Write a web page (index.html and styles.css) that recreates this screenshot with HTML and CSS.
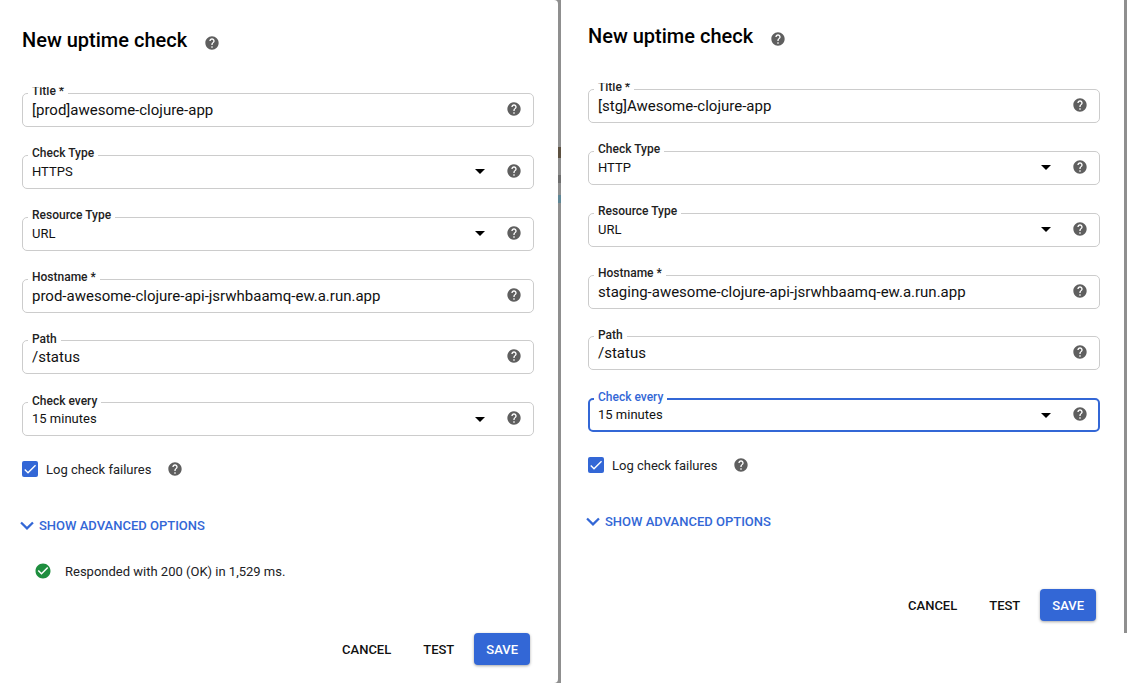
FILE: index.html
```html
<!DOCTYPE html>
<html lang="en">
<head>
  <meta charset="UTF-8" />
  <title>New uptime check</title>
  <link rel="stylesheet" href="styles.css">
</head>
<body>
  <svg class="defs" width="0" height="0">
    <symbol id="help" viewBox="0 0 24 24"><path d="M12 2C6.48 2 2 6.48 2 12s4.48 10 10 10 10-4.48 10-10S17.52 2 12 2zm1 17h-2v-2h2v2zm2.07-7.75l-.9.92C13.45 12.9 13 13.5 13 15h-2v-.5c0-1.1.45-2.1 1.17-2.83l1.24-1.26c.37-.36.59-.86.59-1.41 0-1.1-.9-2-2-2s-2 .9-2 2H8c0-2.21 1.79-4 4-4s4 1.79 4 4c0 .88-.36 1.68-.93 2.25z"/></symbol>
    <symbol id="tick" viewBox="0 0 24 24"><path d="M9 16.2L4.8 12l-1.4 1.4L9 19 21 7l-1.4-1.4z"/></symbol>
    <symbol id="chevron" viewBox="6 8 12 8"><path d="M7.41 8.59L12 13.17l4.59-4.58L18 10l-6 6-6-6z"/></symbol>
    <symbol id="ok" viewBox="0 0 24 24"><path d="M12 2C6.48 2 2 6.48 2 12s4.48 10 10 10 10-4.48 10-10S17.52 2 12 2zm-2 15l-5-5 1.41-1.41L10 14.17l7.59-7.59L19 8l-9 9z"/></symbol>
  </svg>

  <div class="shot">
    <div class="pane pane-prod">
      <section class="dialog dialog-prod">
        <div class="heading">
          <h1>New uptime check</h1>
          <svg class="help help-title"><use href="#help"/></svg>
        </div>

        <div class="field">
          <label class="clipped"><span>Title *</span></label>
          <span class="value big">[prod]awesome-clojure-app</span>
          <svg class="help"><use href="#help"/></svg>
        </div>
        <div class="field">
          <label>Check Type</label>
          <span class="value">HTTPS</span>
          <i class="arrow"></i>
          <svg class="help"><use href="#help"/></svg>
        </div>
        <div class="field">
          <label>Resource Type</label>
          <span class="value">URL</span>
          <i class="arrow"></i>
          <svg class="help"><use href="#help"/></svg>
        </div>
        <div class="field">
          <label>Hostname *</label>
          <span class="value big">prod-awesome-clojure-api-jsrwhbaamq-ew.a.run.app</span>
          <svg class="help"><use href="#help"/></svg>
        </div>
        <div class="field">
          <label>Path</label>
          <span class="value big">/status</span>
          <svg class="help"><use href="#help"/></svg>
        </div>
        <div class="field">
          <label>Check every</label>
          <span class="value">15 minutes</span>
          <i class="arrow"></i>
          <svg class="help"><use href="#help"/></svg>
        </div>

        <div class="log-row">
          <span class="checkbox"><svg><use href="#tick"/></svg></span>
          <span>Log check failures</span>
          <svg class="help"><use href="#help"/></svg>
        </div>

        <div class="advanced">
          <svg class="chevron"><use href="#chevron"/></svg>
          <span>SHOW ADVANCED OPTIONS</span>
        </div>

        <div class="result">
          <svg class="ok"><use href="#ok"/></svg>
          <span>Responded with 200 (OK) in 1,529 ms.</span>
        </div>

        <div class="actions">
          <button class="btn">CANCEL</button>
          <button class="btn">TEST</button>
          <button class="btn primary">SAVE</button>
        </div>
      </section>
    </div>

    <div class="pane pane-stg">
      <section class="dialog dialog-stg">
        <div class="heading">
          <h1>New uptime check</h1>
          <svg class="help help-title"><use href="#help"/></svg>
        </div>

        <div class="field">
          <label class="clipped"><span>Title *</span></label>
          <span class="value big">[stg]Awesome-clojure-app</span>
          <svg class="help"><use href="#help"/></svg>
        </div>
        <div class="field">
          <label>Check Type</label>
          <span class="value">HTTP</span>
          <i class="arrow"></i>
          <svg class="help"><use href="#help"/></svg>
        </div>
        <div class="field">
          <label>Resource Type</label>
          <span class="value">URL</span>
          <i class="arrow"></i>
          <svg class="help"><use href="#help"/></svg>
        </div>
        <div class="field">
          <label>Hostname *</label>
          <span class="value big">staging-awesome-clojure-api-jsrwhbaamq-ew.a.run.app</span>
          <svg class="help"><use href="#help"/></svg>
        </div>
        <div class="field">
          <label>Path</label>
          <span class="value big">/status</span>
          <svg class="help"><use href="#help"/></svg>
        </div>
        <div class="field focused">
          <label>Check every</label>
          <span class="value">15 minutes</span>
          <i class="arrow"></i>
          <svg class="help"><use href="#help"/></svg>
        </div>

        <div class="log-row">
          <span class="checkbox"><svg><use href="#tick"/></svg></span>
          <span>Log check failures</span>
          <svg class="help"><use href="#help"/></svg>
        </div>

        <div class="advanced">
          <svg class="chevron"><use href="#chevron"/></svg>
          <span>SHOW ADVANCED OPTIONS</span>
        </div>

        <div class="actions">
          <button class="btn">CANCEL</button>
          <button class="btn">TEST</button>
          <button class="btn primary">SAVE</button>
        </div>
      </section>
      <div class="edge"></div>
    </div>
  </div>
</body>
</html>
```

FILE: styles.css
```css
html, body {
  margin: 0;
  height: 100%;
  background: #fff;
  overflow: hidden;
}
body {
  font-family: 'Roboto', sans-serif;
  color: #202124;
}
.defs {
  position: absolute;
}
.shot {
  display: flex;
  align-items: flex-start;
}
.pane {
  display: flex;
}
/* the grey strip shows a little of the page behind the dialog */
.pane-prod {
  width: 561px;
  height: 683px;
  background: linear-gradient(to bottom,
    #8f8f8f 147px, #5c5040 147px, #5c5040 158px,
    #8f8f8f 158px, #8f8f8f 175px, #6e6e6e 175px, #6e6e6e 183px,
    #8f8f8f 183px, #8f8f8f 195px, #5f8796 195px, #5f8796 203px,
    #8f8f8f 203px);
}
.pane-stg {
  width: 566px;
  align-items: flex-start;
}
.edge {
  width: 3px;
  height: 633px;
  background: #8f8f8f;
}
.dialog {
  box-sizing: border-box;
  background: #fff;
}
.dialog-prod {
  width: 558px;
  height: 683px;
  padding: 28px 24px 0 22px;
  border-radius: 0 4px 4px 0;
}
.dialog-stg {
  width: 563px;
  height: 633px;
  padding: 24px 24px 0 27px;
}
.heading {
  display: flex;
  align-items: center;
  height: 24px;
  margin-bottom: 41px;
}
h1 {
  margin: 0;
  font-size: 20px;
  font-weight: 500;
  line-height: 24px;
  color: #000;
}
.help {
  flex: none;
  width: 16px;
  height: 16px;
  fill: #5f5f5f;
}
.help-title {
  margin: 5px 0 0 17px;
}
.field {
  position: relative;
  box-sizing: border-box;
  display: flex;
  align-items: center;
  height: 34px;
  margin-bottom: 27.85px;
  padding: 0 11px 0 9px;
  border: 1px solid #ccc;
  border-radius: 5px;
}
.field .help {
  margin-top: -2px;
}
.field label {
  position: absolute;
  left: 5px;
  top: -9.5px;
  padding: 0 4px;
  background: #fff;
  font-size: 12px;
  font-weight: 500;
  line-height: 14px;
  color: #222;
}
.field label.clipped {
  top: -7px;
  height: 10px;
  overflow: hidden;
}
.field label.clipped span {
  display: block;
  margin-top: -3px;
}
.value {
  flex: 1;
  font-size: 13px;
  line-height: 16px;
  color: #111;
}
.value.big {
  font-size: 15px;
}
.arrow {
  width: 0;
  height: 0;
  margin-right: 21px;
  border-left: 5px solid transparent;
  border-right: 5px solid transparent;
  border-top: 5px solid #000;
}
.field.focused {
  border: 2px solid #3367d6;
  padding: 0 10px 0 8px;
}
.field.focused label {
  left: 4px;
  top: -10px;
  color: #3367d6;
}
.log-row {
  display: flex;
  align-items: center;
  height: 18px;
  margin-top: -4px;
  font-size: 13px;
}
.log-row .help {
  margin-left: 16px;
}
.checkbox {
  display: flex;
  width: 16px;
  height: 16px;
  margin-right: 8px;
  border-radius: 2px;
  background: #3367d6;
}
.checkbox svg {
  width: 16px;
  height: 16px;
  fill: #fff;
}
.advanced {
  display: flex;
  align-items: center;
  height: 16px;
  margin: 39px 0 0 -2px;
  font-size: 13px;
  font-weight: 500;
  color: #3367d6;
}
.chevron {
  width: 14px;
  height: 9px;
  margin-right: 5px;
  fill: #3367d6;
}
.result {
  display: flex;
  align-items: center;
  height: 16px;
  margin: 30px 0 0 12px;
  font-size: 13px;
}
.ok {
  width: 18px;
  height: 18px;
  margin-right: 13px;
  fill: #1e8e3e;
}
.actions {
  display: flex;
  justify-content: flex-end;
  gap: 8px;
  margin-top: 54px;
  padding-right: 4px;
}
.dialog-stg .actions {
  margin-top: 60px;
}
.btn {
  height: 32px;
  padding: 0 12px;
  border: 0;
  border-radius: 4px;
  background: transparent;
  font-family: inherit;
  font-size: 13px;
  font-weight: 500;
  color: #111;
}
.btn.primary {
  background: #3367d6;
  color: #fff;
  box-shadow: 0 1px 3px rgba(0,0,0,0.35);
}
```
